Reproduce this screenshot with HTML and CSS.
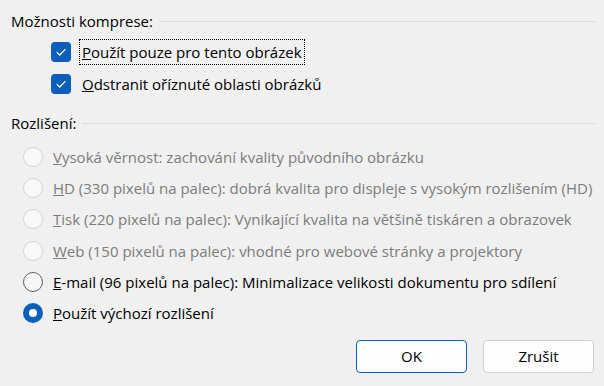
FILE: index.html
```html
<!DOCTYPE html>
<html lang="cs">
<head>
<meta charset="utf-8">
<title>Možnosti komprese</title>
<link rel="stylesheet" href="styles.css">
</head>
<body>
<div class="dialog">
  <div class="group-head"><span class="group-title">Možnosti komprese:</span><span class="rule"></span></div>
  <div class="checks">
    <div class="row check-row">
      <span class="checkbox"><svg viewBox="0 0 20 20" width="20" height="20"><path d="M6 10.3 L8.7 13 L14.2 7.4" fill="none" stroke="#fff" stroke-width="1.2" stroke-linecap="round" stroke-linejoin="round"/></svg></span>
      <span class="label focus"><u>P</u>oužít pouze pro tento obrázek</span>
    </div>
    <div class="row check-row">
      <span class="checkbox"><svg viewBox="0 0 20 20" width="20" height="20"><path d="M6 10.3 L8.7 13 L14.2 7.4" fill="none" stroke="#fff" stroke-width="1.2" stroke-linecap="round" stroke-linejoin="round"/></svg></span>
      <span class="label"><u>O</u>dstranit oříznuté oblasti obrázků</span>
    </div>
  </div>
  <div class="group-head second"><span class="group-title">Rozlišení:</span><span class="rule"></span></div>
  <div class="radios">
    <div class="row radio-row disabled"><span class="radio"></span><span class="label"><u>V</u>ysoká věrnost: zachování kvality původního obrázku</span></div>
    <div class="row radio-row disabled"><span class="radio"></span><span class="label"><u>H</u>D (330 pixelů na palec): dobrá kvalita pro displeje s vysokým rozlišením (HD)</span></div>
    <div class="row radio-row disabled"><span class="radio"></span><span class="label"><u>T</u>isk (220 pixelů na palec): Vynikající kvalita na většině tiskáren a obrazovek</span></div>
    <div class="row radio-row disabled"><span class="radio"></span><span class="label"><u>W</u>eb (150 pixelů na palec): vhodné pro webové stránky a projektory</span></div>
    <div class="row radio-row"><span class="radio"></span><span class="label"><u>E</u>-mail (96 pixelů na palec): Minimalizace velikosti dokumentu pro sdílení</span></div>
    <div class="row radio-row"><span class="radio checked"></span><span class="label"><u>P</u>oužít výchozí rozlišení</span></div>
  </div>
  <div class="buttons">
    <button class="btn default">OK</button>
    <button class="btn">Zrušit</button>
  </div>
</div>
</body>
</html>
```
FILE: styles.css
```css
html, body {
  margin: 0;
  padding: 0;
  background: #f0f0f0;
}
body {
  font-family: "Open Sans", "Noto Sans", sans-serif;
  font-size: 15px;
  color: #000;
  width: 604px;
  height: 386px;
  overflow: hidden;
}
.dialog {
  padding: 11px 10px 0 11px;
}
.group-head {
  display: flex;
  align-items: center;
  height: 20px;
}
.group-head.second {
  margin-top: 13px;
}
.group-title {
  white-space: nowrap;
  margin-right: 6px;
}
.rule {
  flex: 1;
  height: 1px;
  background: #dadada;
  margin-right: -1px;
}
.checks {
  margin-top: 5px;
  padding-left: 40px;
}
.row {
  display: flex;
  align-items: center;
  white-space: nowrap;
}
.check-row {
  height: 32px;
}
.checkbox {
  width: 20px;
  height: 20px;
  border-radius: 4px;
  background: #0a5fbd;
  display: flex;
  flex: none;
}
.check-row .label {
  margin-left: 8px;
  padding: 0 2px;
  line-height: 24px;
  border: 1px dotted transparent;
}
.check-row .label.focus {
  border-color: #000;
}
.radios {
  margin-top: 8px;
  padding-left: 12px;
}
.radio-row {
  height: 31.3px;
}
.radio {
  width: 20px;
  height: 20px;
  box-sizing: border-box;
  border-radius: 50%;
  border: 1px solid #5e5e5e;
  background: #f7f7f7;
  flex: none;
  position: relative;
}
.radio-row .label {
  margin-left: 10px;
}
.disabled .radio {
  border-color: #d4d4d4;
  background: #f8f8f8;
}
.disabled .label {
  color: #7c7c7c;
}
.radio.checked {
  border: none;
  background: #0a5fbd;
}
.radio.checked::after {
  content: "";
  position: absolute;
  left: 6px;
  top: 6px;
  width: 8px;
  height: 8px;
  border-radius: 50%;
  background: #fff;
}
.buttons {
  display: flex;
  justify-content: flex-end;
  gap: 16px;
  margin-top: 11px;
}
.btn {
  width: 111px;
  height: 33px;
  box-sizing: border-box;
  font-family: inherit;
  font-size: 15px;
  color: #000;
  background: #fdfdfd;
  border: 1px solid #d0d0d0;
  border-radius: 4px;
  padding: 0;
}
.btn.default {
  border-color: #0a5fbd;
}
```
